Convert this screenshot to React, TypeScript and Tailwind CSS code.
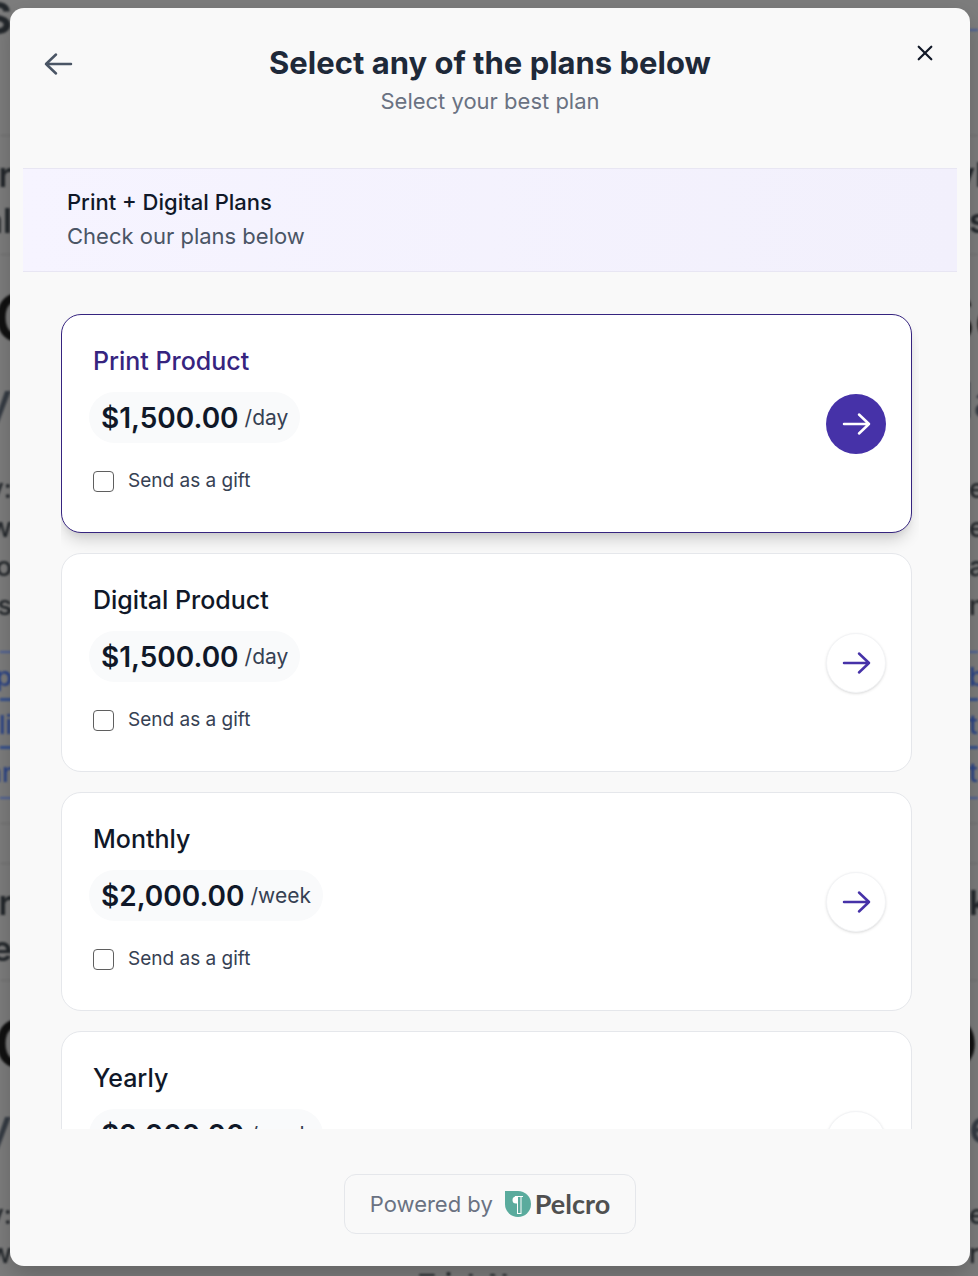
import { useState } from "react";

type Plan = { id: string; name: string; price: string; period: string };

const plans: Plan[] = [
  { id: "print", name: "Print Product", price: "$1,500.00", period: "/day" },
  { id: "digital", name: "Digital Product", price: "$1,500.00", period: "/day" },
  { id: "monthly", name: "Monthly", price: "$2,000.00", period: "/week" },
  { id: "yearly", name: "Yearly", price: "$2,000.00", period: "/week" },
];

function Arrow({ left = false }: { left?: boolean }) {
  return (
    <svg
      viewBox="0 0 30 24"
      fill="none"
      stroke="currentColor"
      strokeWidth="2.5"
      strokeLinecap="round"
      strokeLinejoin="round"
      className={left ? "h-6 w-[30px] rotate-180" : "h-6 w-[30px]"}
      aria-hidden="true"
    >
      <path d="M3 12h25M18 2.500L28 12l-10 9.500" />
    </svg>
  );
}

function PlanCard({ plan, active, onPick }: { plan: Plan; active: boolean; onPick: () => void }) {
  const giftId = `gift-${plan.id}`;
  return (
    <li
      className={
        active
          ? "flex shrink-0 items-center justify-between rounded-[20px] border border-[#36247f] bg-white py-7 pr-[25px] pl-[31px] shadow-[0_10px_15px_-3px_rgba(0,0,0,0.16),0_4px_6px_-2px_rgba(0,0,0,0.06)]"
          : "flex shrink-0 items-center justify-between rounded-[20px] border border-gray-200 bg-white py-7 pr-[25px] pl-[31px]"
      }
    >
      <div className="pb-[9px]">
        <h3
          className={
            active
              ? "text-[25px] leading-9 font-medium text-[#36247f]"
              : "text-[25px] leading-9 font-medium text-gray-900"
          }
        >
          {plan.name}
        </h3>
        <p className="mt-[13px] -ml-1 flex h-[51px] w-fit items-center gap-1.5 rounded-full bg-gray-50 px-3">
          <span className="text-[28px] leading-9 font-semibold text-gray-900">{plan.price}</span>
          <span className="text-[21px] leading-9 text-gray-700">{plan.period}</span>
        </p>
        <div className="mt-6 flex h-7 items-center gap-3.5">
          <input
            id={giftId}
            type="checkbox"
            className="size-[21px] appearance-none rounded-[4px] border border-[#5f5f5f] bg-white checked:bg-[#4632a8]"
          />
          <label htmlFor={giftId} className="text-[19px] leading-7 text-gray-700">
            Send as a gift
          </label>
        </div>
      </div>
      <button
        type="button"
        aria-label={`Select ${plan.name}`}
        onClick={onPick}
        className={
          active
            ? "flex size-[60px] shrink-0 items-center justify-center rounded-full bg-[#4632a8] text-white"
            : "flex size-[60px] shrink-0 items-center justify-center rounded-full border border-gray-100 bg-white text-[#4632a8] shadow-sm"
        }
      >
        <Arrow />
      </button>
    </li>
  );
}

function BackdropPage() {
  return (
    <div aria-hidden="true" className="absolute inset-0 overflow-hidden bg-[#7d7d7d]">
      <div className="flex h-full justify-between text-[#24282c] blur-[1px]">
        <div className="flex w-3 flex-col items-end whitespace-nowrap">
          <b className="h-[135px] text-[44px] leading-9">S</b>
          <div className="flex h-[120px] w-full flex-col items-end border-y border-[#707070] pt-4 text-[34px] leading-[46px] font-semibold">
            <span>r</span>
            <span>al</span>
          </div>
          <b className="h-[110px] w-full pt-7 text-[64px] leading-[70px] font-semibold text-[#111]">
            <span className="-ml-1.5">C</span>
          </b>
          <span className="h-[100px] text-[50px] leading-[70px] font-medium text-[#363c44]">y</span>
          <div className="-mt-1 flex h-[190px] flex-col items-end pt-2 text-[27px] leading-[39px] font-medium">
            <span>y:</span>
            <span>w</span>
            <span>o</span>
            <span>s</span>
          </div>
          <div className="flex w-full flex-col items-end border-t-2 border-[#4a5f99] text-[26px] font-medium text-[#2a4387]">
            <span className="flex h-12 w-full justify-end border-b-[3px] border-[#34508f] leading-[48px]">p</span>
            <span className="flex h-12 w-full justify-end border-b-[3px] border-[#34508f] leading-[48px]">li</span>
            <span className="flex h-[50px] w-full justify-end border-b-2 border-[#4a5f99] leading-[48px]">ar</span>
          </div>
          <div className="mt-6 h-10 w-full shrink-0 border-t border-[#707070]" />
          <div className="flex h-[118px] w-full shrink-0 flex-col items-end border-y border-[#707070] pt-4 text-[34px] leading-[46px] font-semibold">
            <span>r</span>
            <span>e</span>
          </div>
          <b className="h-[110px] w-full shrink-0 pt-7 text-[64px] leading-[70px] font-semibold text-[#111]">
            <span className="-ml-1.5">C</span>
          </b>
          <span className="h-[100px] shrink-0 text-[50px] leading-[70px] font-medium text-[#363c44]">y</span>
          <div className="flex shrink-0 flex-col items-end pt-1 text-[27px] leading-[39px] font-medium">
            <span>y:</span>
            <span>w</span>
          </div>
        </div>
        <div className="self-end overflow-hidden">
          <b className="block h-1.5 text-[26px] leading-7">Trick Name</b>
        </div>
        <div className="flex w-[9px] flex-col whitespace-nowrap">
          <div className="h-[135px] pt-[29px]">
            <div className="border-t-2 border-[#4a5f99]" />
          </div>
          <div className="flex h-[120px] flex-col border-y border-[#707070] pt-4 text-[34px] leading-[46px] font-semibold">
            <span className="-ml-3.5">yl</span>
            <span>s</span>
          </div>
          <b className="h-[110px] pt-7 text-[64px] leading-[70px] font-semibold text-[#111]">
            <span className="-ml-9">S</span>c
          </b>
          <span className="-ml-2 h-[100px] text-[50px] leading-[70px] font-medium text-[#363c44]">la</span>
          <div className="-mt-1 flex h-[190px] flex-col pt-2 text-[27px] leading-[39px] font-medium">
            <span>e</span>
            <span>e</span>
            <span>a</span>
            <span>n</span>
          </div>
          <div className="flex flex-col border-t-2 border-[#4a5f99] text-[26px] font-medium text-[#2a4387]">
            <span className="h-12 border-b-[3px] border-[#34508f] leading-[48px]">b</span>
            <span className="h-12 border-b-[3px] border-[#34508f] leading-[48px]">t</span>
            <span className="h-[50px] border-b-2 border-[#4a5f99] leading-[48px]">t</span>
          </div>
          <div className="mt-6 h-10 shrink-0 border-t border-[#707070]" />
          <div className="h-[118px] shrink-0 border-y border-[#707070] pt-4 text-[34px] leading-[46px] font-semibold">
            k
          </div>
          <b className="flex h-[110px] shrink-0 justify-end pt-7 text-[64px] leading-[70px] font-semibold text-[#111]">
            O
          </b>
          <span className="h-[100px] shrink-0 text-[50px] leading-[70px] font-medium text-[#363c44]">e</span>
          <div className="flex shrink-0 flex-col pt-1 text-[27px] leading-[39px] font-medium">
            <span>e</span>
            <span>ro</span>
          </div>
        </div>
      </div>
    </div>
  );
}

export default function App() {
  const [selected, setSelected] = useState("print");
  return (
    <div className="relative h-screen overflow-hidden pt-2 pr-2 pb-2.5 pl-2.5 font-['Inter',sans-serif]">
      <BackdropPage />
      <div
        role="dialog"
        aria-labelledby="plans-title"
        className="relative flex h-full flex-col rounded-[14px] bg-[#f9f9f9] shadow-[0_10px_25px_rgba(0,0,0,0.2)]"
      >
        <header className="flex h-40 shrink-0 items-start justify-between px-[34px]">
          <button type="button" aria-label="Back" className="mt-11 w-12 text-gray-600">
            <Arrow left />
          </button>
          <div className="pt-8 text-center">
            <h1 id="plans-title" className="text-[31px] leading-[46px] font-bold text-gray-800">
              Select any of the plans below
            </h1>
            <p className="text-[22px] leading-[30px] text-gray-500">Select your best plan</p>
          </div>
          <button
            type="button"
            aria-label="Close"
            className="mt-8 flex w-12 justify-end pt-1 pr-0.5 text-[#111827]"
          >
            <svg viewBox="0 0 18 18" className="size-[18px]" fill="none" stroke="currentColor" strokeWidth="2.2" strokeLinecap="round">
              <path d="M2.700 2.700l12.600 12.600M15.300 2.700l-12.600 12.600" />
            </svg>
          </button>
        </header>

        <section className="mx-[13px] shrink-0 border-y border-[#e8e6f3] bg-linear-to-r from-[#f6f4ff] to-[#f2f0fc] px-11 pt-4 pb-[18px]">
          <h2 className="text-[22px] leading-[34px] font-medium text-gray-900">Print + Digital Plans</h2>
          <p className="text-[22px] leading-[34px] text-gray-600">Check our plans below</p>
        </section>

        <ul className="mx-[51px] mt-[42px] flex min-h-0 flex-1 flex-col gap-5 overflow-y-auto pr-[7px] [scrollbar-width:none]">
          {plans.map((plan) => (
            <PlanCard
              key={plan.id}
              plan={plan}
              active={plan.id === selected}
              onPick={() => setSelected(plan.id)}
            />
          ))}
        </ul>

        <footer className="flex shrink-0 justify-center pt-[45px] pb-8">
          <a
            href="#pelcro"
            className="flex h-[60px] items-center rounded-xl border border-gray-200 px-[25px] text-[22px] leading-8 text-gray-500"
          >
            Powered by
            <svg viewBox="0 0 26 26" className="ml-3 size-[26px]" aria-hidden="true">
              <path d="M0 0h13a13 13 0 1 1-13 13z" fill="#5aab9d" />
              <path d="M12.500 5.500h-1.500a3.500 3.500 0 0 0 0 7h1.500z" fill="#fff" />
              <path d="M12.500 23V5.500h4M16 5.500V23M12.500 22.500h3.500" stroke="#fff" strokeWidth="1" fill="none" />
              <path d="M10 5.500h8" stroke="#fff" strokeWidth="1" />
            </svg>
            <span className="ml-1 font-['Lato',sans-serif] text-[27px] font-bold text-[#505050]">Pelcro</span>
          </a>
        </footer>
      </div>
    </div>
  );
}
